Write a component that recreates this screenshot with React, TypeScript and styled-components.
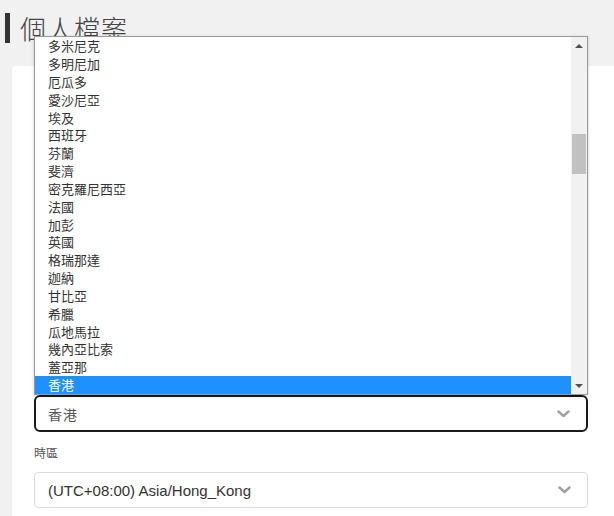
import styled, { createGlobalStyle } from 'styled-components';

const countries = [
  '多米尼克',
  '多明尼加',
  '厄瓜多',
  '愛沙尼亞',
  '埃及',
  '西班牙',
  '芬蘭',
  '斐濟',
  '密克羅尼西亞',
  '法國',
  '加彭',
  '英國',
  '格瑞那達',
  '迦納',
  '甘比亞',
  '希臘',
  '瓜地馬拉',
  '幾內亞比索',
  '蓋亞那',
  '香港',
];

const selectedCountry = '香港';

function Chevron() {
  return (
    <svg width="13" height="8" viewBox="0 0 13 8">
      <path
        d="M1.5 1.5 L6.5 6 L11.5 1.5"
        fill="none"
        stroke="#a0a0a0"
        strokeWidth="2.4"
        strokeLinecap="round"
        strokeLinejoin="round"
      />
    </svg>
  );
}

function App() {
  return (
    <>
      <GlobalStyle />
      <Page>
        <PageHeader>
          <TitleBar />
          <Title>個人檔案</Title>
        </PageHeader>

        <Card>
          {/* country field: its label sits under the open popup */}
          <Field>
            <SelectBox focused>
              <span>{selectedCountry}</span>
              <Chevron />
            </SelectBox>
          </Field>
          <Field>
            <Label>時區</Label>
            <SelectBox>
              <span>(UTC+08:00) Asia/Hong_Kong</span>
              <Chevron />
            </SelectBox>
          </Field>
        </Card>

        {/* native select popup, opened over the form */}
        <Popup>
          <OptionList>
            {countries.map((c) => (
              <OptionRow key={c} selected={c === selectedCountry}>
                {c}
              </OptionRow>
            ))}
          </OptionList>
          <Scrollbar>
            <ArrowUp />
            <Thumb offset={86} />
            <ArrowDown />
          </Scrollbar>
        </Popup>
      </Page>
    </>
  );
}

export default App;

const GlobalStyle = createGlobalStyle`
  html, body {
    margin: 0;
    padding: 0;
    background: #f1f1f1;
    font-family: "Liberation Sans", "Noto Sans CJK TC", sans-serif;
    overflow: hidden;
  }
`;

const Page = styled.div`
  position: relative;
  width: 614px;
  height: 516px;
  overflow: hidden;
`;

const PageHeader = styled.div`
  display: flex;
  align-items: center;
  gap: 10px;
  padding: 12px 0 0 5px;
  height: 32px;
`;

const TitleBar = styled.div`
  width: 5px;
  height: 30px;
  background: #333;
`;

const Title = styled.h1`
  margin: 0;
  font-family: "Noto Sans CJK TC", sans-serif;
  font-size: 26px;
  font-weight: 300;
  color: #444;
  letter-spacing: 1px;
  line-height: 32px;
`;

const Card = styled.div`
  margin: 22px 0 0 12px;
  min-height: 460px;
  background: #fff;
  border-radius: 4px 0 0 0;
  padding: 329px 26px 30px 22px;
  display: flex;
  flex-direction: column;
  gap: 14px;
`;

const Field = styled.div`
  display: flex;
  flex-direction: column;
  gap: 12px;
`;

const Label = styled.label`
  font-family: "Noto Sans CJK TC", sans-serif;
  font-size: 12px;
  line-height: 14px;
  color: #555;
`;

const SelectBox = styled.div<{ focused?: boolean }>`
  box-sizing: border-box;
  display: flex;
  align-items: center;
  justify-content: space-between;
  height: ${({ focused }) => (focused ? '37px' : '36px')};
  padding: 0 16px 0 ${({ focused }) => (focused ? '12px' : '13px')};
  border: ${({ focused }) => (focused ? '2px solid #1a1a1a' : '1px solid #dcdcdc')};
  border-radius: ${({ focused }) => (focused ? '6px' : '4px')};
  font-size: ${({ focused }) => (focused ? '14px' : '15px')};
  color: ${({ focused }) => (focused ? '#555' : '#333')};
  letter-spacing: ${({ focused }) => (focused ? '1px' : '0')};
  background: #fff;
`;

const Popup = styled.div`
  position: absolute;
  left: 34px;
  top: 36px;
  width: 554px;
  height: 359px;
  box-sizing: border-box;
  display: flex;
  background: #fff;
  border: 1px solid #9a9a9a;
  box-shadow: 0 1px 3px rgba(0, 0, 0, 0.2);
  z-index: 10;
`;

const OptionList = styled.div`
  flex: 1;
  display: flex;
  flex-direction: column;
  justify-content: flex-end;
  overflow: hidden;
`;

const OptionRow = styled.div<{ selected?: boolean }>`
  flex: none;
  height: 17.85px;
  line-height: 17.85px;
  padding-left: 13px;
  font-family: "Noto Sans CJK TC", sans-serif;
  font-size: 13px;
  color: ${({ selected }) => (selected ? '#fff' : '#333')};
  background: ${({ selected }) => (selected ? '#1e90ff' : 'transparent')};
`;

const Scrollbar = styled.div`
  width: 16px;
  background: #f1f1f1;
  display: flex;
  flex-direction: column;
  align-items: center;
`;

const ArrowUp = styled.div`
  margin-top: 7px;
  width: 0;
  height: 0;
  border-left: 4px solid transparent;
  border-right: 4px solid transparent;
  border-bottom: 4px solid #505050;
`;

const ArrowDown = styled.div`
  margin-top: auto;
  margin-bottom: 6px;
  width: 0;
  height: 0;
  border-left: 4px solid transparent;
  border-right: 4px solid transparent;
  border-top: 4px solid #505050;
`;

const Thumb = styled.div<{ offset: number }>`
  margin-top: ${({ offset }) => offset}px;
  width: 14px;
  height: 40px;
  background: #c1c1c1;
`;
